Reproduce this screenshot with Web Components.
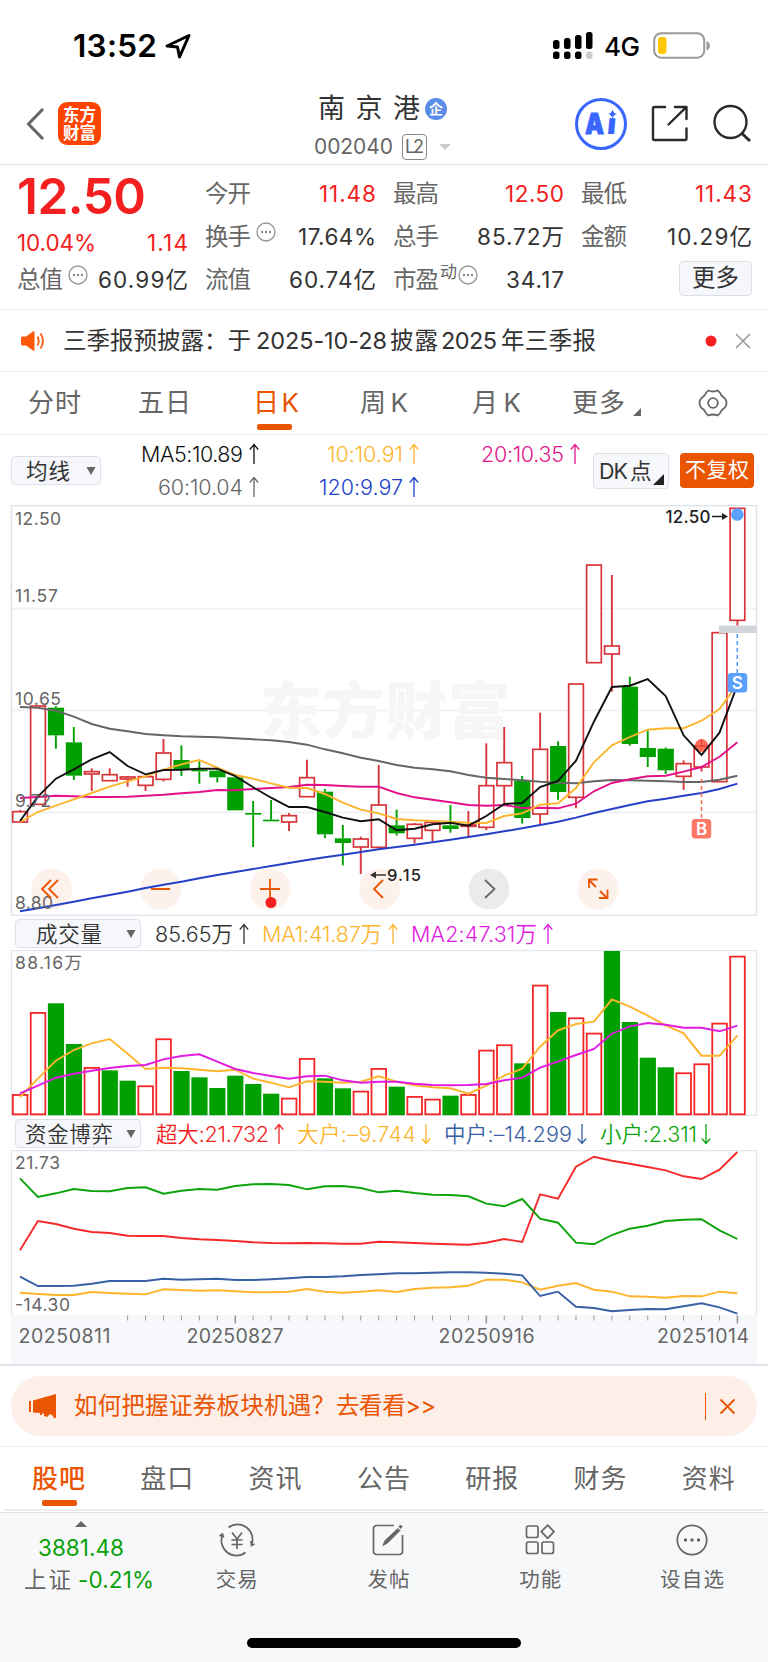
<!DOCTYPE html>
<html lang="zh-CN">
<head>
<meta charset="utf-8">
<title>南京港 002040</title>
<style>
html,body{margin:0;padding:0;background:#fff}
body{width:768px;height:1662px;overflow:hidden;font-family:Inter,"Noto Sans CJK SC",sans-serif;color:#333}
</style>
</head>
<body>
<stock-app></stock-app>
<script>
const define = (name, css, html, init) => {
  const tpl = document.createElement('template');
  tpl.innerHTML = `<style>*{box-sizing:border-box}svg{display:block;flex:none}${css}</style>${html}`;
  customElements.define(name, class extends HTMLElement {
    constructor() {
      super();
      this.attachShadow({ mode: 'open' }).appendChild(tpl.content.cloneNode(true));
    }
    connectedCallback() { if (init && !this._ready) { this._ready = true; init.call(this, this.shadowRoot); } }
  });
};

/* Text tracked so that it fills the width given in "w". */
define('fit-text', `:host{display:block;flex:none;white-space:nowrap;line-height:30px;height:30px}span{display:inline-block}`,
  `<span><slot></slot></span>`, function (root) {
    const w = +this.getAttribute('w'), span = root.querySelector('span');
    this.style.width = w + 'px';
    const n = [...this.textContent].length;
    const natural = span.getBoundingClientRect().width;
    if (n > 1 && natural) span.style.letterSpacing = (w - natural) / (n - 1) + 'px';
  });

define('trend-arrow', `:host{display:block;flex:none;width:10px;height:22px}path{fill:none;stroke:currentColor;stroke-width:1.3}:host([down]) svg{transform:scaleY(-1)}`,
  `<svg width="10" height="22"><path d="M5 21V1.5M.8 6.5L5 1.6L9.2 6.5"/></svg>`);

define('info-dot', `:host{display:block;flex:none;width:20px;height:20px}`,
  `<svg width="20" height="20"><circle cx="10" cy="10" r="9" fill="none" stroke="#999" stroke-width="1.4"/><g fill="#888"><circle cx="6" cy="10" r="1.2"/><circle cx="10" cy="10" r="1.2"/><circle cx="14" cy="10" r="1.2"/></g></svg>`);

define('status-bar', `:host{display:flex;align-items:center;height:90px;padding:2px 0 0 73px;color:#000}
 .t{font-size:31.5px;font-weight:600}.g{font-size:26px;font-weight:500}`,
 `<fit-text class="t" w="84">13:52</fit-text>
 <svg width="28" height="28" style="margin-left:7px"><path d="M3 14L25 3.5L15.5 25L13.5 15Z" fill="none" stroke="#000" stroke-width="3" stroke-linejoin="round"/></svg>
 <svg width="40" height="28" style="margin-left:361px"><g><rect x="0" y="8" width="6.5" height="9" rx="2.5"/><rect x="11" y="6" width="6.5" height="11" rx="2.5"/><rect x="22" y="3" width="6.5" height="14" rx="2.5"/><rect x="33" y="0" width="6.5" height="17" rx="2.5"/><rect x="0" y="19.5" width="6.5" height="7.5" rx="2.5"/><rect x="11" y="19.5" width="6.5" height="7.5" rx="2.5"/><rect x="22" y="19.5" width="6.5" height="7.5" rx="2.5"/><rect x="33" y="19.5" width="6.5" height="7.5" rx="2.5" fill="#ccc"/></g></svg>
 <fit-text class="g" w="36" style="margin-left:11px;position:relative;top:1px">4G</fit-text>
 <svg width="58" height="28" style="margin-left:13px"><rect x="1.2" y="1.2" width="50" height="24.500" rx="7" fill="none" stroke="#999" stroke-width="2"/><rect x="5" y="5" width="8.5" height="17" rx="3" fill="#ffc800"/><path d="M54 9.500v8.500a5 5 0 0 0 0-8.500" fill="#999" stroke="#999"/></svg>`);

define('app-logo', `:host{display:block;width:43px;height:43px;margin-left:13px;border-radius:9px;background:#ff4400;color:#fff;font:600 16.500px/18px "Noto Sans CJK SC",sans-serif;padding:3px 0 0 5px}fit-text{line-height:18px;height:18px}`, `<fit-text w="33">东方</fit-text><fit-text w="33">财富</fit-text>`);

define('stock-header', `:host{display:flex;height:75px;border-bottom:1.5px solid #e3e3e5;position:relative}
 .left{display:flex;width:300px;padding:12px 0 0 26px}
 .mid{width:260px}.title,.code{display:flex;align-items:center}
 .title{height:30px;padding:0;margin:4px 0 0 18px;font-size:27px;color:#333}
 .code{height:28px;margin:9px 0 0 14px;color:#666;font-size:21px}
 .badge{width:22px;height:22px;border-radius:50%;background:#5b8ce8;color:#fff;font:700 14px/21px "Noto Sans CJK SC";text-align:center;margin-left:5px}
 .l2{width:25px;height:26px;border:1.500px solid #888;border-radius:4px;margin-left:9px;padding-left:2px;font-size:18px}
 .l2 fit-text{line-height:24px;height:24px}
 .right{display:flex;padding-top:7px}`,
 `<div class="left"><svg width="19" height="32" style="margin-top:6px"><path d="M17 1L2.500 16L17 31" fill="none" stroke="#666" stroke-width="3"/></svg><app-logo></app-logo></div>
 <div class="mid"><div class="title"><fit-text w="102">南京港</fit-text><div class="badge">企</div></div>
 <div class="code"><fit-text w="79">002040</fit-text><div class="l2"><fit-text w="19">L2</fit-text></div><svg width="14" height="8" style="margin-left:11px"><path d="M1 1h12l-6 6z" fill="#ccc"/></svg></div></div>
 <div class="right"><svg width="54" height="54" style="margin-left:13px"><circle cx="28" cy="27" r="24.500" fill="#fff" stroke="#3866ff" stroke-width="3"/><g font-family="Inter" font-weight="900" fill="#3866ff" stroke="#3866ff" stroke-linejoin="round"><text x="12" y="36.500" font-size="29" stroke-width="1" textLength="19" lengthAdjust="spacingAndGlyphs">A</text><text transform="translate(33.500 37) skewX(-5)" stroke="none" font-size="29" textLength="9" lengthAdjust="spacingAndGlyphs">ı</text></g><path d="M39.500 12.500q1 4 4.500 4.500q-3.500.5-4.500 4.500q-1-4-4.500-4.500q3.500-.5 4.500-4.500" fill="#3866ff"/></svg>
 <svg width="40" height="40" style="margin:7px 0 0 23px"><path d="M15 3H4.500Q3 3 3 4.500V34.500Q3 36 4.500 36H35Q36.500 36 36.500 34.500V24.500M25 3H36.500V15M35.500 3.800L18.500 20.500" fill="none" stroke="#2b2b2b" stroke-width="2.400" stroke-linecap="round" stroke-linejoin="round"/></svg>
 <svg width="42" height="42" style="margin:6px 0 0 22px"><circle cx="18.500" cy="19" r="16" fill="none" stroke="#2b2b2b" stroke-width="2.400"/><path d="M30 30.500L38 38" stroke="#2b2b2b" stroke-width="3"/></svg></div>`);

define('quote-cell', `:host{display:flex;align-items:center;height:43px;color:#333}
 :host([up]){color:#f42020}.l{color:#666;font-size:23.500px}.v{margin-left:auto;font-size:22.500px}.x{display:flex}`,
 `<div class="l"></div><div class="x"><slot></slot></div><div class="v"></div>`, function (root) {
   root.querySelector('.l').innerHTML = `<fit-text w="46">${this.getAttribute('label')}</fit-text>`;
   root.querySelector('.v').innerHTML = `<fit-text w="${this.getAttribute('w')}">${this.getAttribute('value')}</fit-text>`;
 });

define('quote-panel', `:host{display:block;height:145px;border-bottom:1px solid #eee;padding:7px 16px 0 17px}
 .grid{display:grid;grid-template-columns:repeat(4,171px);column-gap:17px}
 .a{grid-row:1/3;color:#f42020}.a .p{font-size:49.500px;font-weight:600;line-height:48px;height:48px;margin-top:0}
 .b{display:flex;justify-content:space-between;font-size:22.500px;margin-top:8px}
 .more{width:73px;height:35px;justify-self:end;align-self:center;border:1.500px solid #dcdfe8;border-radius:4px;background:#f6f7fa;font-size:23.500px;padding:1px 0 0 12px;position:relative;top:-1px}
 info-dot{position:relative;top:-5px}.s{font-size:17px;color:#666;line-height:20px;height:20px;position:relative;top:-8px}`,
 `<div class="grid"><div class="a"><fit-text class="p" w="129">12.50</fit-text><div class="b"><fit-text w="79">10.04%</fit-text><fit-text w="41">1.14</fit-text></div></div>
 <quote-cell up label="今开" value="11.48" w="57"></quote-cell><quote-cell up label="最高" value="12.50" w="59"></quote-cell><quote-cell up label="最低" value="11.43" w="57"></quote-cell>
 <quote-cell label="换手" value="17.64%" w="78"><info-dot style="margin-left:5px"></info-dot></quote-cell><quote-cell label="总手" value="85.72万" w="87"></quote-cell><quote-cell label="金额" value="10.29亿" w="85"></quote-cell>
 <quote-cell label="总值" value="60.99亿" w="90"><info-dot style="margin-left:5px"></info-dot></quote-cell><quote-cell label="流值" value="60.74亿" w="87"></quote-cell><quote-cell label="市盈" value="34.17" w="58"><fit-text class="s" w="18" style="margin-left:1px">动</fit-text><info-dot></info-dot></quote-cell><div class="more"><fit-text w="47">更多</fit-text></div></div>`);

define('notice-bar', `:host{display:flex;align-items:center;height:62px;border-bottom:1px solid #eee;padding:0 17px 0 20px;font-size:23.500px;color:#333}.m{margin-left:5px}`,
 `<svg width="26" height="22"><path d="M1 8q0-1.500 1.500-1.500H6L13 1.500q1.500-1 1.500 1V19.500q0 2-1.500 1L6 15.500H2.500Q1 15.500 1 14z" fill="#fa5a0a"/><path d="M17.500 6.500q2.500 4.500 0 9M20.500 3.500q5 7.500 0 15" fill="none" stroke="#fa5a0a" stroke-width="1.800"/></svg>
 <fit-text w="188" style="margin-left:17px">三季报预披露：于</fit-text><fit-text class="m" w="131">2025-10-28</fit-text><fit-text w="48" style="margin-left:3px">披露</fit-text><fit-text w="56" style="margin-left:3px">2025</fit-text><fit-text w="95" style="margin-left:4px">年三季报</fit-text>
 <svg width="12" height="12" style="margin-left:auto"><circle cx="6" cy="6" r="5.500" fill="#f42020"/></svg><svg width="16" height="16" style="margin-left:18px"><path d="M1 1L15 15M15 1L1 15" stroke="#999" stroke-width="1.600"/></svg>`);

define('period-tabs', `:host{display:flex;align-items:center;height:63px;border-bottom:1px solid #eee;padding-left:28px;font-size:26px;color:#666}
 .on{color:#ea5504;position:relative}.on::after{content:"";position:absolute;left:4px;top:36px;width:35px;height:6px;border-radius:2px;background:#ea5504}`,
 `<fit-text w="53">分时</fit-text><fit-text w="53" style="margin-left:57px">五日</fit-text><div class="on" style="margin-left:62px"><fit-text w="46">日K</fit-text></div><fit-text w="48" style="margin-left:61px">周K</fit-text><fit-text w="49" style="margin-left:64px">月K</fit-text><fit-text w="53" style="margin-left:51px">更多</fit-text>
 <svg width="10" height="10" style="margin:18px 0 0 7px"><path d="M9 1V9H1z" fill="#666"/></svg>
 <svg width="30" height="30" style="margin-left:56px" viewBox="0 0 30 30" fill="none" stroke="#666" stroke-width="1.800"><path d="M10.500 2.500Q15 4.500 19.500 2.500Q22 4 23.500 7.500L24.500 8.500Q28.500 11 28.500 15Q28.500 19 24.500 21.500L23.500 22.500Q22 26 19.500 27.500Q15 25.500 10.500 27.500Q8 26 6.500 22.500L5.500 21.500Q1.500 19 1.500 15Q1.500 11 5.500 8.500L6.500 7.500Q8 4 10.500 2.500Z"/><circle cx="15" cy="15" r="4.800"/></svg>`);

define('drop-button', `:host{display:flex;align-items:center;flex:none;justify-content:space-between;border:1.500px solid #dde0e8;border-radius:4px;background:#f6f7fa;font-size:21.500px;color:#333;padding-right:4px;height:29px}`,
 `<slot></slot><svg width="10" height="10"><path d="M.5 1h9L5 9z" fill="#666"/></svg>`);

define('ma-legend', `:host{display:flex;align-items:center;height:71px;padding-left:11px}
 .cols{display:grid;grid-template-columns:118px 160px 161px;height:66px;margin-left:40px;width:440px;row-gap:0;font-size:21.500px;font-weight:350}
 .i{display:flex;align-items:center;justify-content:flex-end;gap:6px;height:33px;position:relative;top:-.5px}
 .dk{width:76px;height:36px;border:1.500px solid #dde0e8;border-radius:4px;background:#f6f7fa;margin-left:12px;display:flex;align-items:center;font-size:21.500px;padding-left:5px}
 .fq{width:74px;height:35px;border-radius:4px;background:#ea5504;color:#fff;margin-left:11px;font-size:21px;padding:2px 0 0 5px}`,
 `<drop-button style="width:90px;padding-left:14px"><fit-text w="44">均线</fit-text></drop-button>
 <div class="cols"><div class="i" style="color:#111"><fit-text w="102">MA5:10.89</fit-text><trend-arrow></trend-arrow></div><div class="i" style="color:#fdb52e"><fit-text w="76">10:10.91</fit-text><trend-arrow></trend-arrow></div><div class="i" style="color:#e4158a"><fit-text w="83">20:10.35</fit-text><trend-arrow></trend-arrow></div>
 <div class="i" style="color:#666"><fit-text w="85">60:10.04</fit-text><trend-arrow></trend-arrow></div><div class="i" style="color:#2040cc"><fit-text w="84">120:9.97</fit-text><trend-arrow></trend-arrow></div></div>
 <div class="dk"><fit-text w="29">DK</fit-text><fit-text w="22" style="margin-left:2px">点</fit-text><svg width="13" height="13" style="margin:17px 0 0 0"><path d="M12 1V12H1z" fill="#222"/></svg></div><div class="fq"><fit-text w="64">不复权</fit-text></div>`);

const X = i => 20 + 17.935 * i;
const poly = (pts, top, color, w = 1.9) => `<polyline fill="none" stroke="${color}" stroke-width="${w}" points="${pts.map((p, i) => X(i).toFixed(1) + ',' + (top + p / 3).toFixed(1)).join(' ')}"/>`;
const label = (x, y, len, t, extra = '') => `<text x="${x}" y="${y}" font-size="17.500" fill="#666" textLength="${len}" ${extra}>${t}</text>`;
const RED = '#d8363a', GREEN = '#00a000';

define('k-chart', `:host{display:block;height:411px}svg{font-family:Inter,"Noto Sans CJK SC",sans-serif}`, `<svg width="768" height="411" viewBox="0 505 768 411"></svg>`, function (root) {
  const c = [
    'R930 935 966 966','R618 618 913 913','G618 623 706 746','G681 727 827 840','R805 815 822 873','R805 824 842 842','R828 831 837 860','R828 830 856 873','R717 759 838 844','G736 780 809 828',
    'G784 809 814 851','G808 812 832 847','G832 832 931 931','G903 939 944 1041','G900 959 964 964','R939 947 966 993','R779 833 890 890','G867 875 1003 1014','G975 1015 1029 1096','R1010 1017 1041 1122',
    'R795 915 1042 1047','G929 976 1000 1007','R969 973 1015 1030','R962 967 991 1025','G915 976 987 998','R933 975 979 1013','R730 857 982 990','R681 788 857 915','G828 843 954 971','R638 748 942 973',
    'G724 738 876 899','R552 552 892 925','R195 195 488 488','R225 438 462 575','G530 560 732 737','G692 744 771 801','G742 746 811 822','R781 791 829 870','R718 737 801 815','R398 398 845 845','R25 25 361 377'];
  let s = '<rect x="11.500" y="505.500" width="745" height="410" fill="#fff" stroke="#dfe1ea" stroke-width="1.500"/>';
  for (const y of [608.5, 710.5, 812.5]) s += `<path d="M12 ${y}H756" stroke="#eef0f7" stroke-width="1.500"/>`;
  s += '<text x="260" y="734" font-size="62" font-weight="900" fill="#f6f6f6" textLength="250">东方财富</text>';
  for (const b of [51.5, 161, 270, 379.5, 489, 598]) s += `<circle cx="${b}" cy="889" r="20.500" fill="${b === 489 ? '#ebebeb' : '#fdf1eb'}"/>`;
  c.forEach((d, i) => {
    const r = d[0] === 'R', [h, t, b, l] = d.slice(1).split(' ').map(v => 500 + v / 3), x = X(i), k = r ? RED : GREEN;
    if (t - h > .5) s += `<path d="M${x} ${h}V${t}" stroke="${k}" stroke-width="1.900"/>`;
    if (l - b > .5) s += `<path d="M${x} ${b}V${l}" stroke="${k}" stroke-width="1.900"/>`;
    s += r ? `<rect x="${x - 7.3}" y="${t}" width="14.700" height="${b - t}" fill="#fff" stroke="${k}" stroke-width="1.700"/>` : `<rect x="${x - 8}" y="${t}" width="16.200" height="${b - t}" fill="${k}"/>`;
  });
  s += '<circle cx="701.500" cy="745.500" r="6.500" fill="#ff6a55"/><path d="M695 746h13M701.500 739v8" stroke="#d8363a"/>';
  s += poly([621,623,632,650,672,686,694,702,706,709,710,712,715,718,721,726,734,748,760,773,783,795,803,808,814,825,833,837,841,845,848,850,844,840,841,842,844,846,846,839,827], 500, '#666');
  s += poly([894,891,887,889,891,891,890,887,884,880,876,870,871,867,864,861,854,855,858,860,860,879,892,899,907,915,917,915,924,923,925,911,874,849,838,829,827,815,801,770,727], 500, '#e4108a');
  s += poly([966,936,917,898,879,860,844,829,809,793,780,803,825,836,850,863,864,882,908,929,940,957,961,963,965,968,969,948,940,914,910,864,787,736,711,689,685,685,662,627,553], 500, '#fdb52e');
  s += poly([1234,1225,1215,1205,1195,1185,1175,1164,1154,1145,1135,1125,1116,1107,1098,1089,1080,1072,1064,1056,1048,1041,1034,1027,1019,1011,1003,994,985,975,965,953,939,927,915,904,896,887,879,867,851], 500, '#2440c8');
  s += poly([963,890,836,808,778,756,798,823,810,809,806,806,828,862,893,921,921,936,953,964,958,991,986,973,968,977,948,912,909,861,843,782,665,561,557,537,588,706,765,698,555], 500, '#111');
  s += label(15, 525, 46, '12.50') + label(15, 602, 43, '11.57') + label(15, 704.5, 46, '10.65') + label(15, 806.5, 36, '9.72') + label(15, 909, 38, '8.80');
  s += '<g fill="none" stroke="#ea5504" stroke-width="1.800"><path d="M51 880L42 889L51 898M58 880L49 889L58 898M151 889H170M260 889H280M270 879V899M383 880L374 889L383 898"/><path d="M589 888v-8.500h8.500M589 880l7 7M599 898h8.500v-8.500M607 898l-7-7"/><path d="M485 880L494.500 889L485 898" stroke="#666"/></g><circle cx="271" cy="902.500" r="5.500" fill="#f42020"/>';
  s += '<text x="665.500" y="523" font-size="17" fill="#222" font-weight="500" textLength="45">12.50</text><path d="M712 516.500h11" stroke="#222" stroke-width="1.500"/><path d="M722 513l6 3.500l-6 3.500z" fill="#222"/><text x="387" y="881" font-size="16.500" font-weight="500" fill="#222" textLength="34">9.15</text><path d="M375 875h11" stroke="#333" stroke-width="1.500"/><path d="M376 871.500l-6 3.500l6 3.500z" fill="#333"/>';
  s += '<circle cx="737.300" cy="514.500" r="6.300" fill="#5aa0ff"/><rect x="719" y="625.500" width="38" height="7.500" fill="#d2d6db"/><path d="M737.300 634V673" stroke="#4a98ff" stroke-width="1.500" stroke-dasharray="4 3"/><path d="M701.500 779V819" stroke="#ff6a55" stroke-width="1.500" stroke-dasharray="4 3"/>';
  s += '<rect x="727.700" y="673" width="19.500" height="19.500" rx="3.500" fill="#5aa0ff"/><rect x="691.700" y="819" width="19.500" height="19.500" rx="3.500" fill="#ff7767"/><g fill="#fff" font-size="17" font-weight="600" text-anchor="middle"><text x="737.300" y="689">S</text><text x="701.500" y="835">B</text></g>';
  root.querySelector('svg').innerHTML = s;
});

define('legend-row', `:host{display:flex;align-items:center;height:34px;padding:1px 0 0 15px;font-size:21.500px;font-weight:350}`, `<slot></slot>`);

define('volume-chart', `:host{display:block;height:166px}svg{font-family:Inter,"Noto Sans CJK SC",sans-serif}`, `<svg width="768" height="166" viewBox="0 950 768 166"></svg>`, function (root) {
  const v = 'R538 R292 G265 G387 R457 G466 G497 R512 R371 G468 G487 G519 G482 G507 G536 R549 R430 G490 G520 R528 R460 G515 R544 R552 G542 R538 R405 R389 G445 R210 G291 R308 R354 G108 G321 G428 G457 R473 R446 R324 R123'.split(' ');
  let s = '<rect x="11.500" y="950.500" width="745" height="165" fill="#fff" stroke="#e3e5ed" stroke-width="1.300"/>';
  v.forEach((d, i) => {
    const y = 915 + d.slice(1) / 3, x = X(i);
    s += d[0] === 'R' ? `<rect x="${x - 7.2}" y="${y + .6}" width="14.600" height="${1114.3 - y - .6}" fill="#fff" stroke="#f42626" stroke-width="1.800"/>` : `<rect x="${x - 8}" y="${y}" width="16.200" height="${1115.2 - y}" fill="${GREEN}"/>`;
  });
  s += poly([546,491,437,405,385,372,416,462,458,460,464,469,464,491,503,517,499,500,503,500,484,500,511,517,520,536,512,482,461,395,346,327,320,253,275,302,331,355,422,422,362], 915, '#fdb52e');
  s += poly([535,512,488,476,467,459,453,450,433,423,418,440,462,474,483,491,484,482,496,503,500,500,506,510,511,510,507,496,488,458,440,420,402,356,334,324,329,338,338,349,332], 915, '#e21be2');
  s += label(15, 968.5, 48, '88.16') + label(64.5, 968.5, 17, '万');
  root.querySelector('svg').innerHTML = s;
});

define('fund-chart', `:host{display:block;height:216px}svg{font-family:Inter,"Noto Sans CJK SC",sans-serif}`, `<svg width="768" height="216" viewBox="0 1150 768 216"></svg>`, function (root) {
  let s = '<path d="M11.500 1315V1150.500H756.500V1315" fill="#fff" stroke="#e3e5ed" stroke-width="1.300"/><rect x="11" y="1315" width="746" height="49" fill="#f7f8fb"/><rect x="0" y="1364" width="768" height="2" fill="#e4e5ea"/>';
  s += poly([518,522,525,525,516,519,521,523,508,510,512,511,514,517,517,515,507,515,518,515,511,516,507,503,502,497,479,479,487,509,497,489,509,515,529,530,533,528,529,515,520], 1120, '#fdb52e');
  s += poly([470,498,498,497,491,483,483,483,476,479,478,476,480,480,478,475,471,471,469,465,463,460,460,458,457,457,458,461,466,528,515,560,564,574,570,567,568,559,550,562,581], 1120, '#3860a4');
  s += poly([391,303,312,326,336,339,347,348,348,354,358,360,363,367,369,370,369,370,371,371,365,367,369,371,373,374,368,357,366,223,236,140,110,122,131,141,151,169,177,149,96], 1120, '#f42a2a');
  s += poly([175,231,220,207,213,214,204,202,221,212,207,209,198,193,192,195,208,199,198,204,217,212,219,224,225,229,251,259,237,296,308,368,373,345,326,317,303,299,298,331,357], 1120, '#0ca30c');
  for (let i = 6; i < 41; i++) s += `<path d="M${X(i)} 1315.500v${i % 14 === 12 ? 8 : 5}" stroke="#999" stroke-width="${i % 14 === 12 ? 1.6 : 1}"/>`;
  s += label(15, 1168.5, 45, '21.73') + label(15, 1310.5, 55, '-14.30');
  for (const [x, w, t] of [[18.5, 92, '20250811'], [186.500, 97, '20250827'], [438.500, 96, '20250916'], [657, 92, '20251014']]) s += `<text x="${x}" y="1343" font-size="19.500" fill="#666" textLength="${w}">${t}</text>`;
  root.querySelector('svg').innerHTML = s;
});

define('promo-banner', `:host{display:block;height:81px;padding:10px 11px 0;border-bottom:1.500px solid #eee}
 .b{height:60px;border-radius:30px;background:#fdeee7;color:#ea5504;display:flex;align-items:center;padding:0 21px 0 17px;font-size:23.500px}
 .v{width:1.500px;height:27px;background:#ea5504;margin-left:auto}`,
 `<div class="b"><svg width="30" height="26"><path d="M1 8h2v11H1zM5 7.500L28 1V25h-2l-2-3v0L22 21l-3 3l-3-1v-2L14 20v2h-2v-2L5 19.500z" fill="#ea5504"/></svg><fit-text w="261" style="margin-left:16px">如何把握证券板块机遇？</fit-text><fit-text w="100" style="margin-left:1px">去看看&gt;&gt;</fit-text><div class="v"></div><svg width="17" height="17" style="margin-left:13px"><path d="M1.500 1.500L15.500 15.500M15.500 1.500L1.500 15.500" stroke="#ea5504" stroke-width="1.800"/></svg></div>`);

define('section-tabs', `:host{display:block;height:66px;border-bottom:1.500px solid #e0e2e6;}
 .r{display:flex;gap:55.300px;padding:17px 0 0 32px;height:63px;font-size:26px;color:#666;margin:0 5px 0 0;}
 .on{color:#ea5504;font-weight:500;position:relative}.on::after{content:"";position:absolute;left:10px;top:36px;width:35px;height:5.500px;border-radius:2px;background:#ea5504}
 hr{margin:-1px 5px 0;border:0;height:1.500px;background:#ecedf0}`,
 `<div class="r"><div class="on"><fit-text w="53">股吧</fit-text></div><fit-text w="53">盘口</fit-text><fit-text w="53">资讯</fit-text><fit-text w="53">公告</fit-text><fit-text w="53">研报</fit-text><fit-text w="53">财务</fit-text><fit-text w="53">资料</fit-text></div><hr>`);

define('nav-item', `:host{display:flex;flex-direction:column;align-items:center;width:152px;padding-top:9.500px;color:#666;font-size:20.500px}div{margin-top:8px}`,
 `<slot name="icon"></slot><div><slot></slot></div>`);

define('bottom-nav', `:host{display:block;height:149px;background:#f7f8fa;color:#666}
 .r{display:flex;height:125px}.idx{width:161px;padding-top:7px}.n{color:#0aa00a;font-size:22.500px}.z{display:flex;font-size:22.500px}
 .home{width:274px;height:9.500px;border-radius:5px;background:#000;margin:0 auto}svg{fill:none;stroke:#666;stroke-width:1.700}`,
 `<div class="r"><div class="idx"><svg width="14" height="8" style="margin-left:74px"><path d="M1 7h12L7 1z" fill="#666" stroke="none"/></svg><fit-text class="n" w="86" style="margin:5px 0 0 38px">3881.48</fit-text><div class="z" style="margin:2px 0 0 24px"><fit-text w="47">上证</fit-text><fit-text w="76" style="color:#0aa00a;margin-left:7px">-0.21%</fit-text></div></div>
 <nav-item><svg slot="icon" width="38" height="34" viewBox="0 0 38 34"><path d="M10.500 4.500A15 15 0 0 1 33.500 22M36.500 21l-3 1.500l-.5-4.500M27.500 29.500A15 15 0 0 1 4.500 12M1.500 13l3-2l1 3.500M14 9.500l5 6.500l5-6.500M19 16v10M13.500 17h11M13.500 21.500h11"/></svg><fit-text w="42">交易</fit-text></nav-item>
 <nav-item><svg slot="icon" width="32" height="34" viewBox="0 0 32 34"><path d="M22 2.500H5q-3.500 0-3.500 3.500V28q0 3.500 3.500 3.500H27q3.500 0 3.500-3.500V12"/><path d="M11 22.500l2-5L26 5.500l2 2L15.500 20zM27 3.500l1.500-1.500l1.700 1.700L28.700 5.500z" fill="#666" stroke-width="1"/></svg><fit-text w="42">发帖</fit-text></nav-item>
 <nav-item><svg slot="icon" width="30" height="34" viewBox="0 0 30 34"><rect x="1.500" y="3" width="11.500" height="11.500" rx="2"/><rect x="1.500" y="19" width="11.500" height="11.500" rx="2"/><rect x="17" y="19" width="11.500" height="11.500" rx="2"/><path d="M22.700 2.200L29 8.700L22.700 15.300L16.300 8.700Z" stroke-linejoin="round"/></svg><fit-text w="42">功能</fit-text></nav-item>
 <nav-item><svg slot="icon" width="34" height="34" viewBox="0 0 34 34"><circle cx="17" cy="17" r="14.700"/><g fill="#666" stroke="none"><circle cx="10.500" cy="17" r="1.700"/><circle cx="17" cy="17" r="1.700"/><circle cx="23.500" cy="17" r="1.700"/></g></svg><fit-text w="64">设自选</fit-text></nav-item></div><div class="home"></div>`);

define('stock-app', `:host{display:flex;flex-direction:column;width:768px;height:1662px}:host>*{flex:none}
 legend-row trend-arrow{margin-left:6px}`,
 `<status-bar></status-bar><stock-header></stock-header><quote-panel></quote-panel><notice-bar></notice-bar><period-tabs></period-tabs><ma-legend style="margin-bottom:-1px"></ma-legend><k-chart></k-chart>
 <legend-row><drop-button style="width:126px;padding-left:20px"><fit-text w="66">成交量</fit-text></drop-button><fit-text w="78" style="margin-left:14px">85.65万</fit-text><trend-arrow></trend-arrow>
 <fit-text w="120" style="color:#fdb52e;margin-left:13px">MA1:41.87万</fit-text><trend-arrow style="color:#fdb52e"></trend-arrow><fit-text w="126" style="color:#e21be2;margin-left:13px">MA2:47.31万</fit-text><trend-arrow style="color:#e21be2"></trend-arrow></legend-row>
 <volume-chart></volume-chart>
 <legend-row><drop-button style="width:126px;padding-left:9px"><fit-text w="88">资金博弈</fit-text></drop-button><fit-text w="113" style="margin-left:15px;color:#f42020">超大:21.732</fit-text><trend-arrow style="color:#f42020;margin-left:5px"></trend-arrow>
 <fit-text w="119" style="color:#fdb52e;margin-left:13px">大户:–9.744</fit-text><trend-arrow down style="color:#fdb52e;margin-left:5px"></trend-arrow><fit-text w="128" style="color:#3860a4;margin-left:13px">中户:–14.299</fit-text><trend-arrow down style="color:#3860a4;margin-left:5px"></trend-arrow><fit-text w="97" style="color:#0ca30c;margin-left:13px">小户:2.311</fit-text><trend-arrow down style="color:#0ca30c;margin-left:4px"></trend-arrow></legend-row>
 <fund-chart></fund-chart><promo-banner></promo-banner><section-tabs></section-tabs><bottom-nav></bottom-nav>`);
</script>
</body>
</html>
